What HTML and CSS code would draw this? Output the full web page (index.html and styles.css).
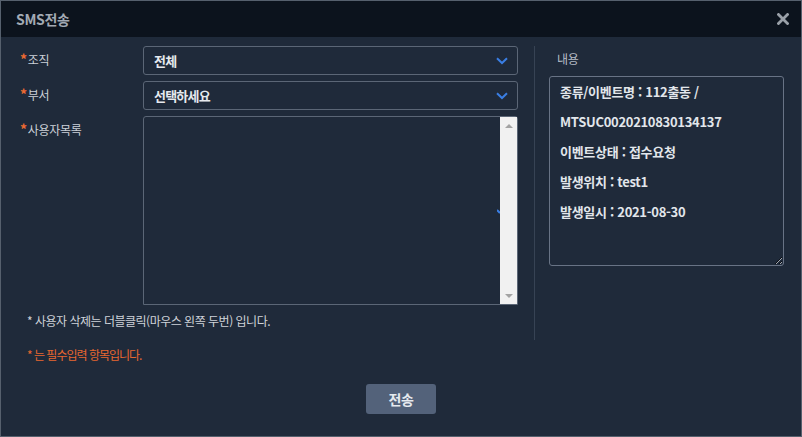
FILE: index.html
```html
<!DOCTYPE html>
<html lang="ko">
<head>
<meta charset="utf-8">
<title>SMS전송</title>
<link rel="stylesheet" href="styles.css">
</head>
<body>
<div class="dialog">
  <div class="header">
    <span class="title">SMS전송</span>
    <button class="close" aria-label="닫기">
      <svg width="12" height="12" viewBox="0 0 12 12"><path d="M1.5 1.5 L10.5 10.5 M10.5 1.5 L1.5 10.5" stroke="#9aa0a8" stroke-width="2.8" stroke-linecap="square"/></svg>
    </button>
  </div>
  <div class="main">
    <div class="left">
      <div class="form">
        <label class="label"><span class="req">*</span>조직</label>
        <div class="select">
          <span class="select-text">전체</span>
          <svg class="chev" width="12" height="8" viewBox="0 0 12 8"><path d="M1 1.2 L6 6 L11 1.2" fill="none" stroke="#3a7ee3" stroke-width="2"/></svg>
        </div>
        <label class="label"><span class="req">*</span>부서</label>
        <div class="select">
          <span class="select-text">선택하세요</span>
          <svg class="chev" width="12" height="8" viewBox="0 0 12 8"><path d="M1 1.2 L6 6 L11 1.2" fill="none" stroke="#3a7ee3" stroke-width="2"/></svg>
        </div>
        <label class="label"><span class="req">*</span>사용자목록</label>
        <div class="listbox">
          <div class="list-body"><svg class="peek" width="3" height="5" viewBox="0 0 3 5"><path d="M0 1 L3 4" stroke="#3a7ee3" stroke-width="2"/></svg></div>
          <div class="scrollbar">
            <span class="arrow up"></span>
            <span class="arrow down"></span>
          </div>
        </div>
      </div>
      <p class="note">* 사용자 삭제는 더블클릭(마우스 왼쪽 두번) 입니다.</p>
      <p class="note req-note">* 는 필수입력 항목입니다.</p>
    </div>
    <div class="divider"></div>
    <div class="right">
      <div class="content-label">내용</div>
      <textarea class="content" readonly>종류/이벤트명 : 112출동 /
MTSUC0020210830134137
이벤트상태 : 접수요청
발생위치 : test1
발생일시 : 2021-08-30</textarea>
    </div>
  </div>
  <div class="footer">
    <button class="send">전송</button>
  </div>
</div>
</body>
</html>
```
FILE: styles.css
```css
* { box-sizing: border-box; }
html, body {
  margin: 0;
  padding: 0;
  background: #1f2a3a;
}
body {
  width: 802px;
  height: 437px;
  overflow: hidden;
  font-family: "Noto Sans CJK KR", "Noto Sans", sans-serif;
}
.dialog {
  width: 802px;
  height: 437px;
  border: 1px solid #56606d;
  background: #1f2a3a;
  display: flex;
  flex-direction: column;
}
.header {
  height: 36px;
  flex: none;
  background: #0c131d;
  display: flex;
  align-items: center;
  justify-content: space-between;
  padding: 0 12px 0 15px;
}
.title {
  font-size: 14px;
  font-weight: 700;
  color: #a3aab4;
  letter-spacing: -0.3px;
}
.close {
  border: 0;
  padding: 0;
  background: none;
  width: 12px;
  height: 12px;
  display: flex;
}
.main {
  display: flex;
  align-items: flex-start;
  padding: 9px 17px 0 19px;
}
.left {
  width: 498px;
  flex: none;
}
.form {
  display: grid;
  grid-template-columns: 123px 375px;
  row-gap: 6px;
}
.label {
  font-size: 12px;
  line-height: 26px;
  color: #ccd1d8;
  letter-spacing: -0.3px;
}
.req {
  color: #ee6a32;
  font-size: 14px;
  font-weight: 700;
  margin-right: 1px;
}
.select {
  height: 29px;
  border: 1px solid #5b6676;
  border-radius: 3px;
  display: flex;
  align-items: center;
  justify-content: space-between;
  padding: 0 9px 0 10px;
}
.select-text {
  font-size: 13px;
  font-weight: 700;
  color: #e6e9ee;
  letter-spacing: -0.8px;
}
.chev { display: block; margin-top: 1px; }
.listbox {
  height: 189px;
  border: 1px solid #5b6676;
  border-radius: 3px 3px 0 0;
  display: flex;
}
.list-body {
  flex: 1;
  display: flex;
  align-items: center;
  justify-content: flex-end;
  padding-top: 2px;
}
.peek { display: block; }
.scrollbar {
  width: 17px;
  background: #f1f1f1;
  display: flex;
  flex-direction: column;
  justify-content: space-between;
  align-items: center;
  padding: 7px 0 6px;
}
.arrow {
  width: 0;
  height: 0;
  border-left: 4px solid transparent;
  border-right: 4px solid transparent;
}
.arrow.up { border-bottom: 4px solid #a3a3a3; }
.arrow.down { border-top: 4px solid #a3a3a3; }
.note {
  margin: 8px 0 0 7px;
  font-size: 12px;
  line-height: 16px;
  color: #cfd3d9;
  letter-spacing: -0.5px;
}
.note.req-note {
  margin-top: 18px;
  color: #e8672f;
  letter-spacing: -1px;
}
.divider {
  width: 1px;
  height: 294px;
  background: #374354;
  margin: 0 14px 0 16px;
  flex: none;
}
.right {
  width: 235px;
  flex: none;
}
.content-label {
  height: 30px;
  line-height: 26px;
  padding-left: 8px;
  font-size: 12px;
  color: #b7bec8;
  letter-spacing: -0.3px;
}
.content {
  display: block;
  width: 235px;
  height: 190px;
  margin: 0;
  border: 1px solid #687385;
  border-radius: 3px;
  background: transparent;
  color: #e2e6eb;
  font-family: "Noto Sans CJK KR", "Noto Sans", sans-serif;
  font-size: 13px;
  font-weight: 700;
  line-height: 30px;
  letter-spacing: -0.3px;
  padding: 0 10px;
  outline: none;
  overflow: hidden;
}
.footer {
  display: flex;
  justify-content: center;
  padding-top: 21px;
}
.send {
  width: 70px;
  height: 30px;
  border: 0;
  border-radius: 3px;
  background: #53627a;
  color: #e6eaef;
  font-family: "Noto Sans CJK KR", "Noto Sans", sans-serif;
  font-size: 14px;
  font-weight: 700;
  letter-spacing: -0.5px;
  padding: 0;
}
```
